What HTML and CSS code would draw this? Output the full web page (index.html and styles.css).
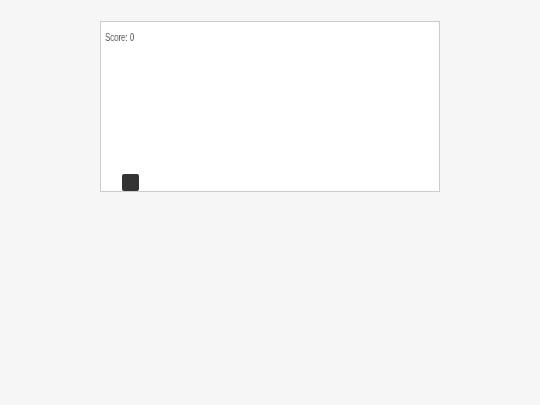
FILE: index.html
```html
<!DOCTYPE html>
<html>
<head>
<meta charset="utf-8">
<link rel="stylesheet" href="styles.css">
</head>
<body>
<div class="game">
  <div class="score"><span class="score-text">Score: 0</span></div>
  <div class="player"></div>
</div>
</body>
</html>
```

FILE: styles.css
```css
html, body {
  margin: 0;
  padding: 0;
  background: #f6f6f6;
}
body {
  padding-top: 21px;
}
.game {
  position: relative;
  width: 338px;
  height: 169px;
  margin: 0 auto;
  background: #ffffff;
  border: 1px solid #cccccc;
}
.score {
  padding: 10px 0 0 4px;
  font-family: "Liberation Sans", Arial, sans-serif;
  font-size: 10px;
  line-height: 12px;
  color: #555555;
}
.score-text {
  display: inline-block;
  transform: scaleX(0.78);
  transform-origin: left top;
  will-change: transform;
}
.player {
  position: absolute;
  left: 21px;
  bottom: 0;
  width: 17px;
  height: 17px;
  border-radius: 2px;
  background: #333333;
}
```
